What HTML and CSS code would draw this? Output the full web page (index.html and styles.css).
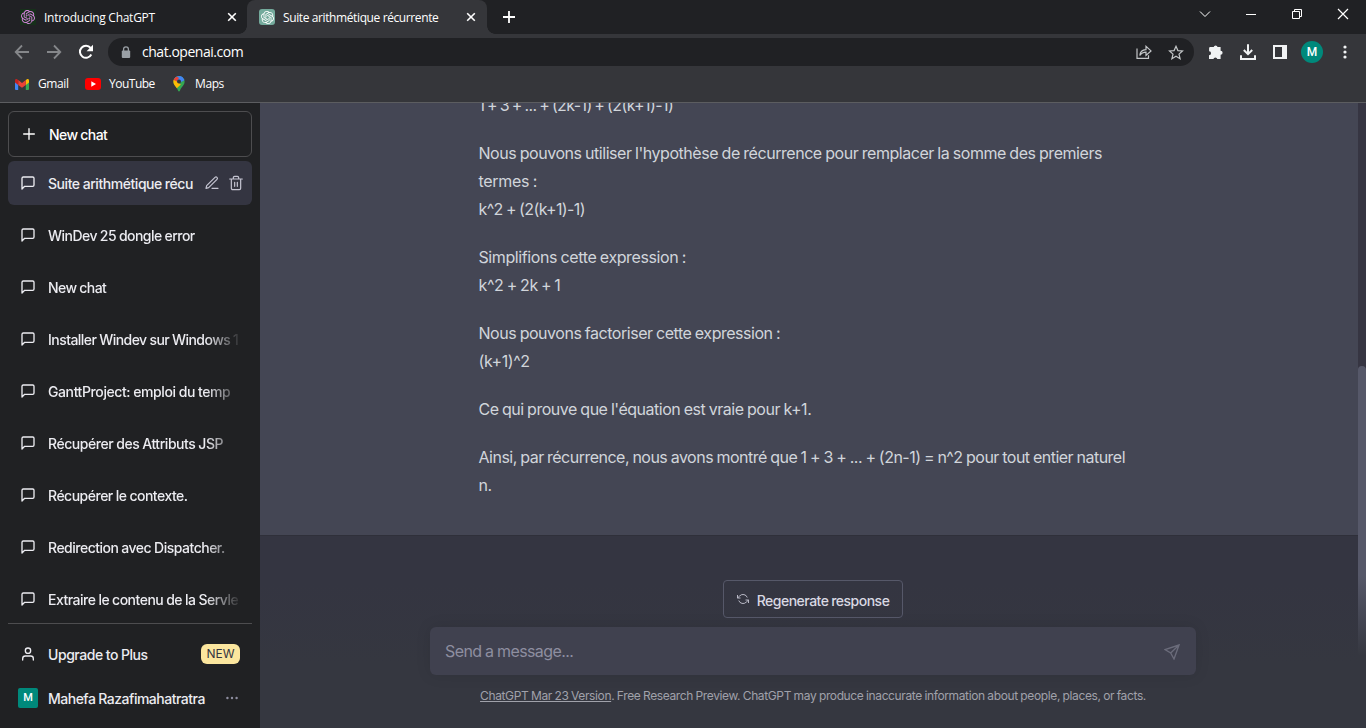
FILE: index.html
```html
<!DOCTYPE html>
<html lang="fr">
<head>
<meta charset="utf-8">
<title>Suite arithmétique récurrente</title>
<link rel="stylesheet" href="styles.css">
</head>
<body>
<svg class="defs" width="0" height="0">
  <symbol id="openai" viewBox="0 0 24 24"><path fill="currentColor" d="M22.2819 9.8211a5.9847 5.9847 0 0 0-.5157-4.9108 6.0462 6.0462 0 0 0-6.5098-2.9A6.0651 6.0651 0 0 0 4.9807 4.1818a5.9847 5.9847 0 0 0-3.9977 2.9 6.0462 6.0462 0 0 0 .7427 7.0966 5.98 5.98 0 0 0 .511 4.9107 6.051 6.051 0 0 0 6.5146 2.9001A5.9847 5.9847 0 0 0 13.2599 24a6.0557 6.0557 0 0 0 5.7718-4.2058 5.9894 5.9894 0 0 0 3.9977-2.9001 6.0557 6.0557 0 0 0-.7475-7.0729zm-9.022 12.6081a4.4755 4.4755 0 0 1-2.8764-1.0408l.1419-.0804 4.7783-2.7582a.7948.7948 0 0 0 .3927-.6813v-6.7369l2.02 1.1686a.071.071 0 0 1 .038.052v5.5826a4.504 4.504 0 0 1-4.4945 4.4944zm-9.6607-4.1254a4.4708 4.4708 0 0 1-.5346-3.0137l.142.0852 4.783 2.7582a.7712.7712 0 0 0 .7806 0l5.8428-3.3685v2.3324a.0804.0804 0 0 1-.0332.0615L9.74 19.9502a4.4992 4.4992 0 0 1-6.1408-1.6464zM2.3408 7.8956a4.485 4.485 0 0 1 2.3655-1.9728V11.6a.7664.7664 0 0 0 .3879.6765l5.8144 3.3543-2.0201 1.1685a.0757.0757 0 0 1-.071 0l-4.8303-2.7865A4.504 4.504 0 0 1 2.3408 7.872zm16.5963 3.8558L13.1038 8.364 15.1192 7.2a.0757.0757 0 0 1 .071 0l4.8303 2.7913a4.4944 4.4944 0 0 1-.6765 8.1042v-5.6772a.79.79 0 0 0-.407-.667zm2.0107-3.0231l-.142-.0852-4.7735-2.7818a.7759.7759 0 0 0-.7854 0L9.409 9.2297V6.8974a.0662.0662 0 0 1 .0284-.0615l4.8303-2.7866a4.4992 4.4992 0 0 1 6.6802 4.66zM8.3065 12.863l-2.02-1.1638a.0804.0804 0 0 1-.038-.0567V6.0742a4.4992 4.4992 0 0 1 7.3757-3.4537l-.142.0805L8.704 5.459a.7948.7948 0 0 0-.3927.6813zm1.0976-2.3654l2.602-1.4998 2.6069 1.4998v2.9994l-2.5974 1.4997-2.6067-1.4997Z"/></symbol>
  <symbol id="chat" viewBox="0 0 24 24"><path d="M21 15a2 2 0 0 1-2 2H7l-4 4V5a2 2 0 0 1 2-2h14a2 2 0 0 1 2 2z"/></symbol>
  <symbol id="x" viewBox="0 0 10 10"><path d="M1.2 1.2l7.6 7.6M8.8 1.2L1.2 8.8"/></symbol>
</svg>

<header class="browser">
  <div class="tabstrip">
    <div class="tab">
      <span class="favicon fav-dark"><svg width="14" height="14"><use href="#openai"/></svg></span>
      <span class="tab-title t1">Introducing ChatGPT</span>
      <svg class="close" width="10" height="10"><use href="#x"/></svg>
    </div>
    <div class="tab active">
      <span class="favicon fav-green"><svg width="13" height="13"><use href="#openai"/></svg></span>
      <span class="tab-title t2">Suite arithmétique récurrente</span>
      <svg class="close" width="10" height="10"><use href="#x"/></svg>
    </div>
    <svg class="newtab" width="12" height="12" viewBox="0 0 12 12"><path d="M6 0v12M0 6h12" stroke="#fff" stroke-width="1.8"/></svg>
    <div class="winctl">
      <svg width="12" height="12" viewBox="0 0 12 12"><path d="M1 3.5l5 5 5-5"/></svg>
      <svg width="12" height="12" viewBox="0 0 12 12"><path d="M1 6.5h10"/></svg>
      <svg width="12" height="12" viewBox="0 0 12 12"><path d="M1.500 3.500h7v7h-7zM3.500 3.500v-2h7v7h-2"/></svg>
      <svg width="12" height="12" viewBox="0 0 12 12"><path d="M1 1l10 10M11 1L1 11" stroke-width="1.200"/></svg>
    </div>
  </div>

  <div class="toolbar">
    <svg class="nav" width="16" height="16" viewBox="0 0 16 16"><path d="M15 8H2M8 1.500L1.700 8 8 14.500"/></svg>
    <svg class="nav" width="16" height="16" viewBox="0 0 16 16"><path d="M1 8h13M8 1.500L14.300 8 8 14.500"/></svg>
    <svg class="reload" width="16" height="16" viewBox="0 0 16 16"><path d="M13.300 10.500A6 6 0 1 1 12.600 4" fill="none" stroke="#fff" stroke-width="2"/><path d="M15 .8v6.400H8.600z" fill="#fff"/></svg>
    <div class="omnibox">
      <svg width="10" height="13" viewBox="0 0 10 13"><rect x=".8" y="4.500" width="8.400" height="7.500" rx="1" fill="#9aa0a6"/><path d="M2.600 5.500V3.300a2.400 2.400 0 0 1 4.800 0v2.200" fill="none" stroke="#9aa0a6" stroke-width="1.300"/></svg>
      <span class="url">chat.openai.com</span>
      <svg class="share" width="16" height="14" viewBox="0 0 16 14"><path d="M1 3.500v9.800h11.500v-3M3.800 10.500c.3-3.800 2.500-5.700 6.200-5.800V1.300l5 4.600-5 4.500V7.200C7 7.200 5.300 8.200 3.800 10.500z"/></svg>
      <svg class="star" width="16" height="15" viewBox="0 0 16 15"><path d="M8 1.300l1.900 4.300 4.600.4-3.500 3.100 1.100 4.600L8 11.300l-4.100 2.400L5 9.100 1.500 6l4.600-.4z"/></svg>
    </div>
    <svg class="ext" width="16" height="16" viewBox="0 0 16 16"><path d="M2.300 3h3.400a2 2 0 0 1 3.900 0h3v3.700a2 2 0 0 1 0 4V15H9.300a2 2 0 0 0-3.900 0H1v-3.700a2 2 0 0 0 .1-4V4.200A1.200 1.200 0 0 1 2.300 3z" fill="#f1f3f4"/></svg>
    <svg class="dl" width="16" height="16" viewBox="0 0 16 16"><path d="M8 .3v10M3.800 6L8 10.200 12.200 6M1 11.200V15h14v-3.800" fill="none" stroke="#f1f3f4" stroke-width="2"/></svg>
    <svg class="panel" width="14" height="14" viewBox="0 0 14 14"><path d="M0 0h14v14H0zM2 2v10h7V2z" fill="#f1f3f4" fill-rule="evenodd"/></svg>
    <span class="avatar">M</span>
    <svg class="kebab" width="4" height="14" viewBox="0 0 4 14"><g fill="#f1f3f4"><circle cx="2" cy="2" r="1.600"/><circle cx="2" cy="7" r="1.600"/><circle cx="2" cy="12" r="1.600"/></g></svg>
  </div>

  <div class="bookmarks">
    <svg width="14" height="11" viewBox="0 0 14 11"><path d="M0 1.500V10a1 1 0 0 0 1 1h2.200V4z" fill="#4285f4"/><path d="M14 1.500V10a1 1 0 0 1-1 1h-2.200V4z" fill="#34a853"/><path d="M10.800 1L12 .2c1-.6 2 0 2 1.200v2.200l-3.200 2.300z" fill="#fbbc04"/><path d="M3.200 1L7 3.900 10.800 1v4.900L7 8.700 3.200 5.900z" fill="#ea4335"/><path d="M3.200 1L2 .2C1-.4 0 .2 0 1.400v2.200l3.200 2.300z" fill="#c5221f"/></svg>
    <span class="b1">Gmail</span>
    <svg width="16" height="12" viewBox="0 0 16 12"><rect width="16" height="12" rx="3" fill="#f00"/><path d="M6.300 3.300v5.400L11 6z" fill="#fff"/></svg>
    <span class="b2">YouTube</span>
    <svg width="12" height="16" viewBox="0 0 12 16"><defs><clipPath id="pin"><path d="M6 0a5.600 5.600 0 0 1 5.600 5.700c0 3.300-3.200 4.700-4.700 9.100-.3 1-1.500 1-1.800 0C3.600 10.400.4 9 .4 5.700A5.600 5.600 0 0 1 6 0z"/></clipPath></defs><g clip-path="url(#pin)"><path d="M0 0h12v16H0z" fill="#34a853"/><path d="M0 0h12L4 9z" fill="#4285f4"/><path d="M0 0v5l3.500 1L6 2 3 0z" fill="#ea4335"/><path d="M0 3.500l3.800 2 4 3L3 13 0 10z" fill="#fbbc04"/><path d="M5 0h7v4L8 6 4 5 8 1z" fill="#4285f4"/></g><circle cx="6" cy="5.600" r="2" fill="#35363a"/></svg>
    <span class="b3">Maps</span>
  </div>
</header>

<div class="app">
  <aside class="sidebar">
    <button class="new-chat"><svg class="ico" width="16" height="16" viewBox="0 0 24 24"><path d="M12 4v16M4 12h16"/></svg><span class="h3">New chat</span></button>
    <nav class="history">
      <div class="item current"><svg class="ico" width="16" height="16"><use href="#chat"/></svg><span class="label h1">Suite arithmétique récu</span>
        <svg class="ico act" width="16" height="16" viewBox="0 0 24 24"><path d="M12 20h9M16.500 3.500a2.120 2.120 0 0 1 3 3L7 19l-4 1 1-4z"/></svg>
        <svg class="ico act" width="16" height="16" viewBox="0 0 24 24"><path d="M2.500 6h19M19 6v14a2 2 0 0 1-2 2H7a2 2 0 0 1-2-2V6M8 6V4a2 2 0 0 1 2-2h4a2 2 0 0 1 2 2v2M10 11v6M14 11v6"/></svg></div>
      <div class="item"><svg class="ico" width="16" height="16"><use href="#chat"/></svg><span class="label h2">WinDev 25 dongle error</span></div>
      <div class="item"><svg class="ico" width="16" height="16"><use href="#chat"/></svg><span class="label h3">New chat</span></div>
      <div class="item"><svg class="ico" width="16" height="16"><use href="#chat"/></svg><span class="label h4">Installer Windev sur Windows 1</span></div>
      <div class="item"><svg class="ico" width="16" height="16"><use href="#chat"/></svg><span class="label h5">GanttProject: emploi du temp</span></div>
      <div class="item"><svg class="ico" width="16" height="16"><use href="#chat"/></svg><span class="label h6">Récupérer des Attributs JSP</span></div>
      <div class="item"><svg class="ico" width="16" height="16"><use href="#chat"/></svg><span class="label h7">Récupérer le contexte.</span></div>
      <div class="item"><svg class="ico" width="16" height="16"><use href="#chat"/></svg><span class="label h8">Redirection avec Dispatcher.</span></div>
      <div class="item"><svg class="ico" width="16" height="16"><use href="#chat"/></svg><span class="label h9">Extraire le contenu de la Servle</span></div>
    </nav>
    <footer class="account">
      <div class="item"><svg class="ico" width="16" height="16" viewBox="0 0 24 24"><path d="M20 21v-2a4 4 0 0 0-4-4H8a4 4 0 0 0-4 4v2"/><circle cx="12" cy="7" r="4"/></svg><span class="label u1">Upgrade to Plus</span><span class="badge">NEW</span></div>
      <div class="item user"><span class="square">M</span><span class="label u2">Mahefa Razafimahatratra</span><svg class="dots" width="12" height="4" viewBox="0 0 12 4"><circle cx="1.400" cy="2" r="1.200"/><circle cx="6" cy="2" r="1.200"/><circle cx="10.600" cy="2" r="1.200"/></svg></div>
    </footer>
  </aside>

  <main class="main">
    <article class="answer">
      <p><span class="m1">1 + 3 + ... + (2k-1) + (2(k+1)-1)</span></p>
      <p><span class="m2">Nous pouvons utiliser l'hypothèse de récurrence pour remplacer la somme des premiers</span><br><span class="m3">termes :</span><br><span class="m4">k^2 + (2(k+1)-1)</span></p>
      <p><span class="m5">Simplifions cette expression :</span><br><span class="m6">k^2 + 2k + 1</span></p>
      <p><span class="m7">Nous pouvons factoriser cette expression :</span><br><span class="m8">(k+1)^2</span></p>
      <p><span class="m9">Ce qui prouve que l'équation est vraie pour k+1.</span></p>
      <p><span class="m10">Ainsi, par récurrence, nous avons montré que 1 + 3 + ... + (2n-1) = n^2 pour tout entier naturel</span><br>n.</p>
    </article>
    <section class="composer">
      <button class="regen"><svg width="12" height="12" viewBox="0 0 24 24"><path d="M1 4v6h6M23 20v-6h-6M20.500 9A9 9 0 0 0 5.600 5.600L1 10M23 14l-4.600 4.400A9 9 0 0 1 3.500 15"/></svg><span>Regenerate response</span></button>
      <div class="input"><span>Send a message...</span><svg width="16" height="16" viewBox="0 0 24 24"><path d="M22.500 1.500L1.500 8.500l8.500 5 5 9zM22.500 1.500L10 13.500"/></svg></div>
      <p class="legal"><u>ChatGPT Mar 23 Version</u>. Free Research Preview. ChatGPT may produce inaccurate information about people, places, or facts.</p>
    </section>
    <div class="scrollbar"><div class="thumb"></div></div>
  </main>
</div>
</body>
</html>
```
FILE: styles.css
```css
* { box-sizing: border-box; }
html, body { margin: 0; height: 728px; overflow: hidden; }
body { background: #343541; font-family: Inter, "Liberation Sans", sans-serif; display: flex; flex-direction: column; }
button { font: inherit; color: inherit; background: none; margin: 0; }
svg { flex: none; display: block; }
.defs { position: absolute; }

/* browser chrome */
.browser { flex: none; height: 103px; background: #35363a; border-bottom: 1px solid #5c5d60; font-family: "Open Sans", "Noto Sans", sans-serif; color: #fff; font-size: 12px; }
.tabstrip { height: 34px; background: #202124; display: flex; align-items: center; }
.tab { width: 247px; height: 34px; display: flex; align-items: center; padding: 0 10px 0 20px; }
.tab.active { position: relative; width: 240px; padding: 0 11px 0 12px; background: #35363a; border-radius: 8px 8px 0 0; }
.tab.active::before, .tab.active::after { content: ""; position: absolute; bottom: 0; width: 8px; height: 8px; }
.tab.active::before { left: -8px; background: radial-gradient(circle at 0 0, transparent 7.5px, #35363a 8px); }
.tab.active::after { right: -8px; background: radial-gradient(circle at 100% 0, transparent 7.5px, #35363a 8px); }
.favicon { width: 16px; height: 16px; display: flex; align-items: center; justify-content: center; }
.fav-dark { background: #16301a; color: #d885e0; }
.fav-green { background: #74aa9c; color: #fff; border-radius: 3px; }
.tab-title { flex: 1; margin-left: 8px; white-space: nowrap; }
.t1 { letter-spacing: -.27px; }
.t2 { letter-spacing: -.39px; }
.close { stroke: #fff; stroke-width: 1.6; fill: none; }
.newtab { margin-left: 16px; }
.winctl { margin-left: auto; display: flex; gap: 34px; padding-right: 17px; margin-top: -6px; }
.winctl svg { fill: none; stroke: #fff; }
.toolbar { height: 36px; display: flex; align-items: center; padding-left: 14px; }
.nav { margin-right: 16px; fill: none; stroke: #85878a; stroke-width: 1.8; }
.reload { margin-right: 14px; }
.omnibox { width: 1086px; height: 28px; border-radius: 14px; background: #202124; display: flex; align-items: center; padding: 0 10px 0 13px; font-size: 14px; }
.url { margin: -1px 0 0 11px; flex: 1; letter-spacing: -.47px; }
.share, .star { fill: none; stroke: #c4c7c9; stroke-width: 1.2; }
.share { margin-right: 16px; }
.ext { margin-left: 14px; }
.dl { margin-left: 16px; }
.panel { margin-left: 17px; }
.avatar { width: 22px; height: 22px; border-radius: 50%; background: #00897b; margin-left: 14px; font: 500 12px/22px Roboto, sans-serif; text-align: center; }
.kebab { margin-left: 19.5px; }
.bookmarks { height: 28px; display: flex; align-items: center; padding-left: 15px; }
.bookmarks span { margin-top: -1px; }
.b1 { width: 47px; margin-left: 9px; letter-spacing: -.4px; }
.b2 { width: 64px; margin-left: 8px; letter-spacing: -.5px; }
.b3 { margin-left: 10px; letter-spacing: -.4px; }

/* sidebar */
.app { flex: 1; min-height: 0; display: flex; }
.sidebar { width: 260px; flex: none; background: #202123; padding: 8px 8px 0; font-size: 14px; font-weight: 500; word-spacing: -.3px; letter-spacing: -.5px; color: #ececf1; display: flex; flex-direction: column; }
.new-chat { flex: none; height: 46px; border: 1px solid #4d4d4f; border-radius: 6px; display: flex; align-items: center; padding: 0 12px; gap: 12px; color: #fff; margin-bottom: 4px; text-align: left; word-spacing: inherit; }
.new-chat span { margin-top: 1px; }
.ico { fill: none; stroke: currentColor; stroke-width: 2; stroke-linecap: round; stroke-linejoin: round; }
.history { display: flex; flex-direction: column; gap: 8px; height: 462px; flex: none; overflow: hidden; }
.item { flex: none; height: 44px; display: flex; align-items: center; padding: 0 12px; border-radius: 6px; white-space: nowrap; }
.label { margin-left: 12px; line-height: 20px; }
.history .label { margin-top: 2px; width: 192px; flex: none; -webkit-mask-image: linear-gradient(to right, #000 158px, transparent 194px); mask-image: linear-gradient(to right, #000 158px, transparent 194px); }
.item.current { background: #343541; }
.history .current .label { width: 148px; -webkit-mask-image: none; mask-image: none; }
.h1 { letter-spacing: -.44px; }
.h2 { letter-spacing: -.535px; }
.h3 { letter-spacing: -.58px; }
.h4 { letter-spacing: -.55px; }
.h5 { letter-spacing: -.4px; }
.h6 { letter-spacing: -.45px; }
.act { stroke-width: 1.8; color: #c5c5d2; margin-left: 8px; margin-top: -1px; }
.account { border-top: 1px solid #4d4d4f; padding-top: 9px; }
.account .ico { margin-top: -2px; }
.u1 { letter-spacing: -.44px; }
.badge { margin-left: auto; width: 39px; height: 20px; border-radius: 6px; background: #fbe69e; color: #343541; font-size: 12px; line-height: 20px; text-align: center; font-weight: 400; letter-spacing: -.1px; margin-top: -2px; }
.item.user { padding-left: 10px; padding-right: 14px; }
.user .label { margin-left: 10px; }
.square { width: 20px; height: 20px; border-radius: 2px; background: #00897b; color: #fff; font: 500 11px/20px Roboto, sans-serif; letter-spacing: 0; text-align: center; margin-top: -2px; }
.dots { margin-left: auto; fill: #8e8ea0; margin-top: -2px; }

/* conversation */
.main { position: relative; flex: 1; min-width: 0; background: linear-gradient(#343541 480px, #353740 560px); color: #d1d5db; display: flex; flex-direction: column; overflow: hidden; }
.answer { flex: none; height: 433px; background: #444654; border-bottom: 1px solid #2f303a; padding-left: 218.5px; font-size: 16px; line-height: 28px; white-space: nowrap; margin-right: 8px; overflow: hidden; word-spacing: -.6px; letter-spacing: -.45px; }
.answer p { margin: 0 0 20px; }
.answer p:first-child { margin-top: -12px; }
.m1 { letter-spacing: -.6px; word-spacing: -1.2px; }
.m3 { letter-spacing: -.3px; }
.m4 { letter-spacing: -.64px; }
.m5 { letter-spacing: -.4px; }
.m6 { letter-spacing: -.36px; word-spacing: -1px; }
.m7 { letter-spacing: -.465px; }
.m8 { letter-spacing: -.43px; }
.m9 { letter-spacing: -.475px; }
.m10 { letter-spacing: -.51px; }
.composer { padding: 44px 170px 0; display: flex; flex-direction: column; align-items: center; }
.regen { width: 180px; height: 38px; border: 1px solid #565869; border-radius: 4px; font-size: 14px; font-weight: 500; letter-spacing: -.5px; word-spacing: -.5px; color: #d9d9e3; display: flex; align-items: center; justify-content: center; gap: 8px; padding: 2px 0 0; white-space: nowrap; }
.regen svg { fill: none; stroke: #c5c5d2; stroke-width: 1.8; margin-top: -3px; }
.input { margin-top: 9px; width: 766px; height: 48px; border-radius: 6px; background: #40414f; box-shadow: 0 0 15px rgba(0,0,0,.1); display: flex; align-items: center; justify-content: space-between; padding: 2px 16px 0 15px; color: #8e8ea0; font-size: 16px; letter-spacing: -.6px; word-spacing: -.3px; }
.input span { margin-top: -2px; }
.input svg { fill: none; stroke: #6b6c7b; stroke-width: 2; }
.legal { margin: 12px 0 0; font-size: 12px; line-height: 18px; letter-spacing: -.375px; word-spacing: -.4px; color: #a0a1aa; white-space: nowrap; }
.scrollbar { position: absolute; right: 0; top: 0; width: 8px; height: 100%; padding-top: 263px; background: linear-gradient(#363542 480px, #353740 540px); }
.thumb { height: 300px; border-radius: 4px 4px 0 0; background: linear-gradient(#565869 210px, #353740 290px); }
```
